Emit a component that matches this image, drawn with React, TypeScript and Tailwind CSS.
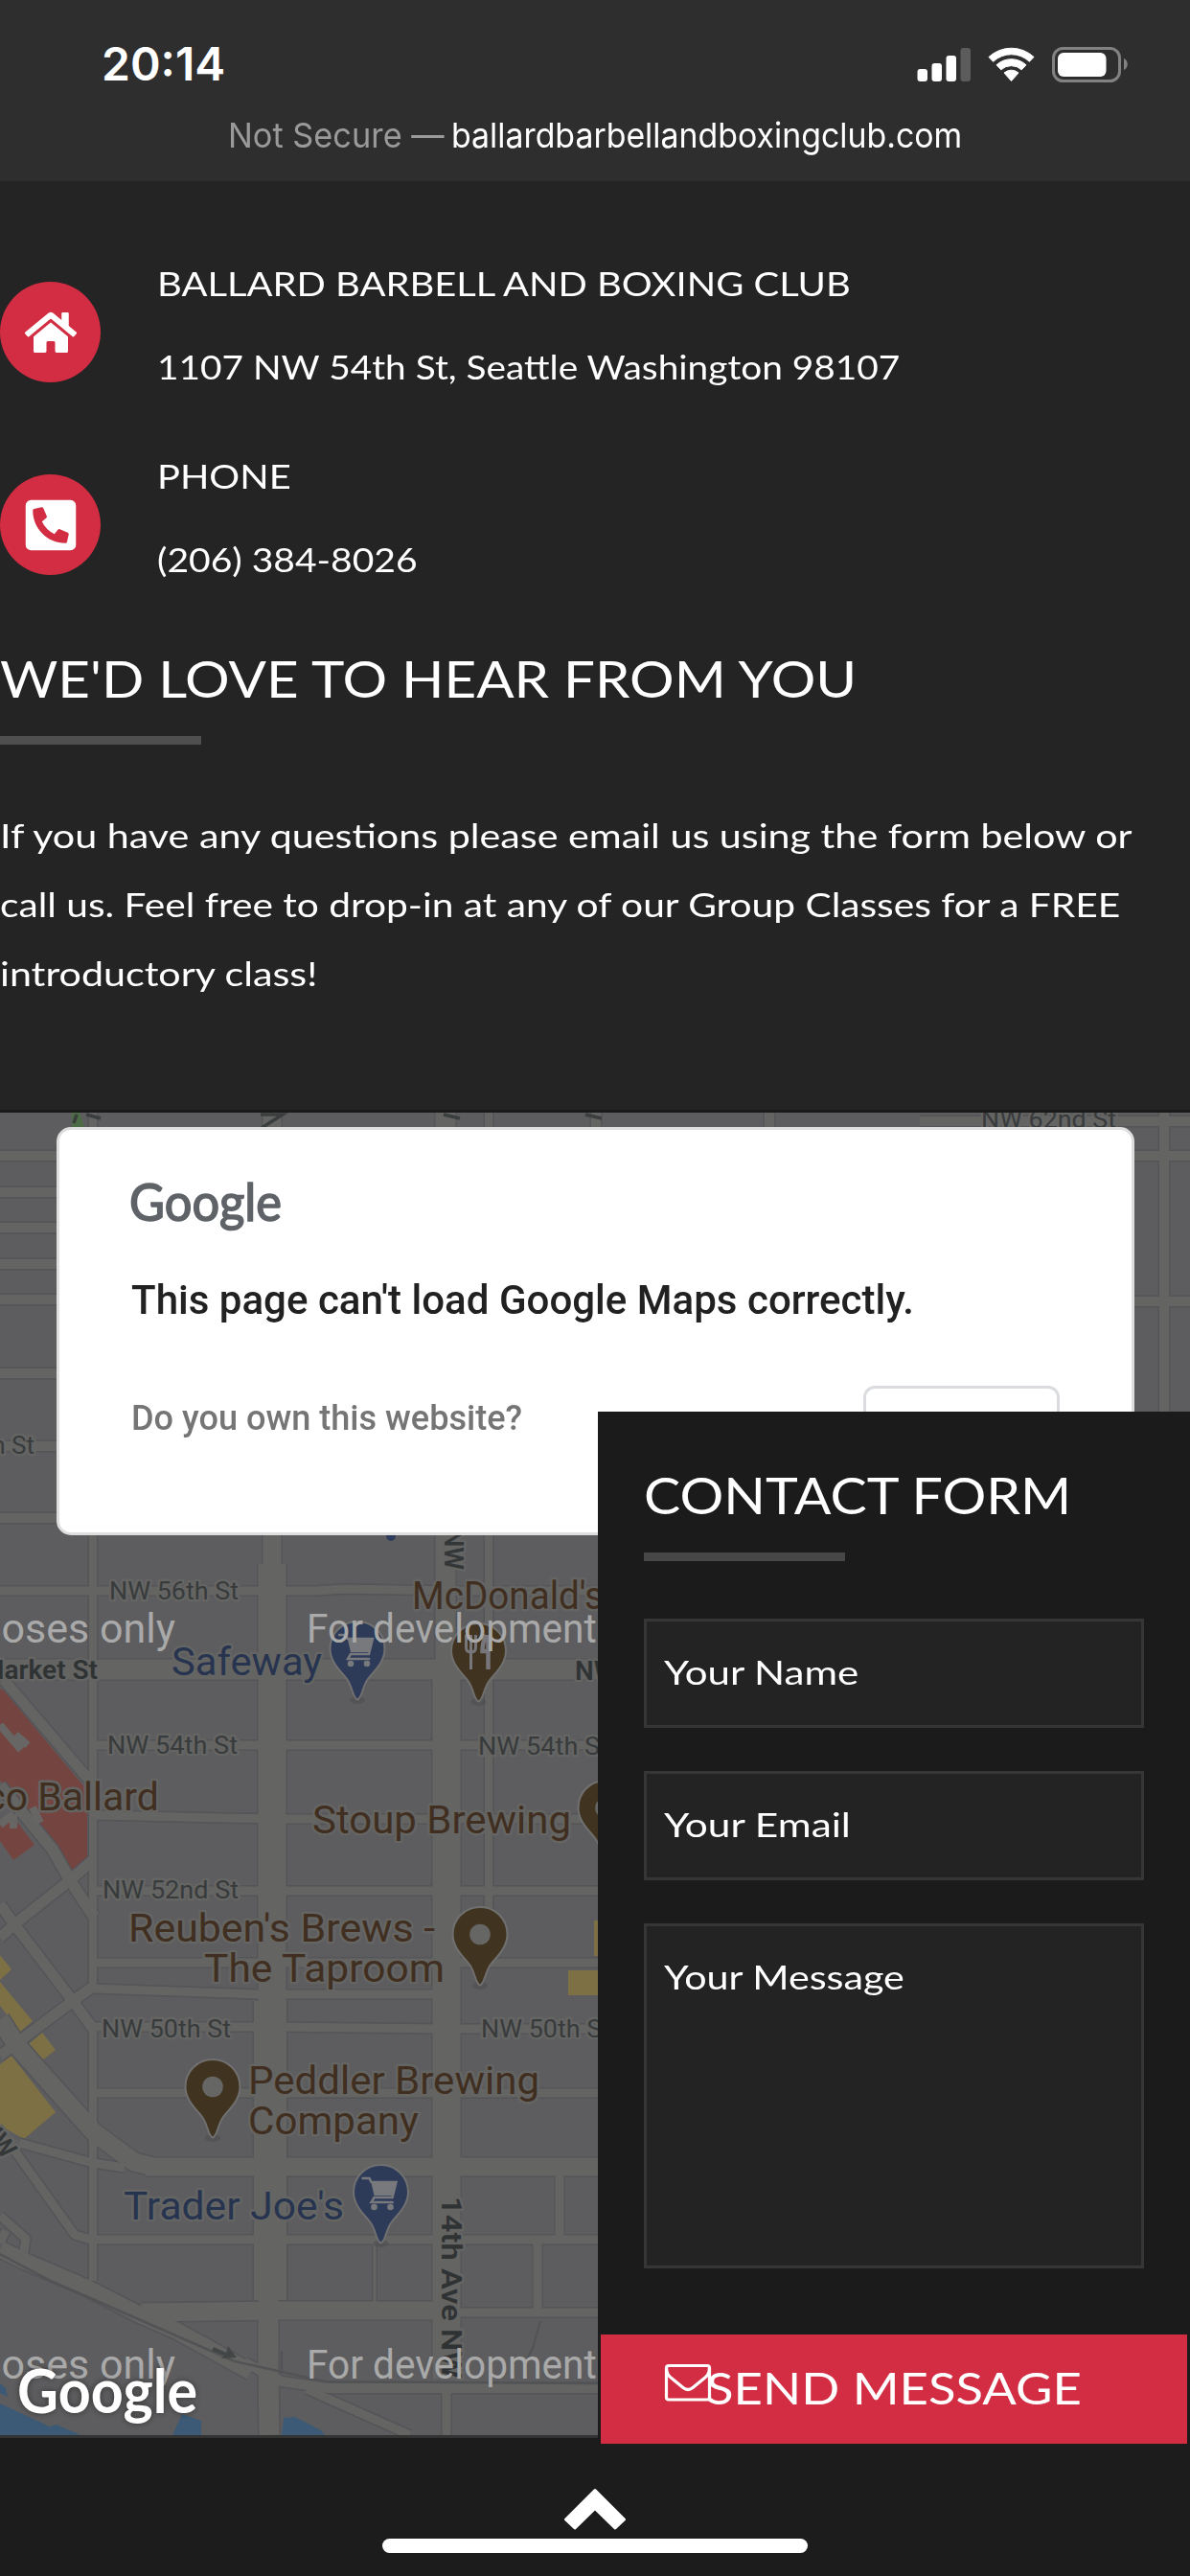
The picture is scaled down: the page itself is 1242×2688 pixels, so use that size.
import { useLayoutEffect, useRef, useState, type ReactNode } from "react";
import { FaHome, FaPhoneSquareAlt } from "react-icons/fa";

/* Single line of text stretched horizontally to a given width. */
function Fit({ w, children, className = "" }: { w: number; children: ReactNode; className?: string }) {
  const ref = useRef<HTMLSpanElement>(null);
  const [scale, setScale] = useState(1);
  useLayoutEffect(() => {
    if (ref.current) setScale(w / ref.current.offsetWidth);
  }, [w]);
  return (
    <span ref={ref} className={`inline-block origin-left whitespace-nowrap ${className}`} style={{ transform: `scaleX(${scale})` }}>
      {children}
    </span>
  );
}

function StatusBar() {
  return (
    <header className="h-[189px] bg-[#2e2e2e] font-['Inter',sans-serif]">
      <div className="flex h-[116px] items-start justify-between pl-[106px] pr-[64px] pt-[38px]">
        <div className="text-[48px] font-semibold leading-[58px] text-white">
          <Fit w={129}>20:14</Fit>
        </div>
        <svg className="mt-[10px] h-[40px] w-[222px]" viewBox="956 48 222 40" fill="#fff">
          <rect x="957.5" y="72" width="10.5" height="13" rx="3" />
          <rect x="972.5" y="66" width="10.5" height="19" rx="3" />
          <rect x="987.5" y="58" width="10.5" height="27" rx="3" />
          <rect x="1002.5" y="50" width="10.5" height="35" rx="3" fill="#5c5c5c" />
          <path d="M1032 59.5a34.5 34.5 0 0 1 47 0l-4.6 4.8a27.5 27.5 0 0 0-37.8 0z" strokeLinejoin="round" stroke="#fff" strokeWidth="1" />
          <path d="M1040 67.8a22.7 22.7 0 0 1 31 0l-4.8 5a15.8 15.8 0 0 0-21.4 0z" strokeLinejoin="round" stroke="#fff" strokeWidth="1" />
          <path d="M1048 76a11.4 11.4 0 0 1 15 0l-7.5 8.5z" strokeLinejoin="round" stroke="#fff" strokeWidth="1" />
          <rect x="1099.5" y="50.5" width="69" height="34" rx="10" fill="none" stroke="#828282" strokeWidth="3" />
          <rect x="1104" y="55" width="50.5" height="25" rx="6" />
          <path d="M1173 61c5 2 5 10 0 12z" fill="#828282" />
        </svg>
      </div>
      <div className="flex pl-[238px] text-[36px] leading-[50px]">
        <div className="w-[233px] text-[#9a9a9a]"><Fit w={226}>Not Secure —</Fit></div>
        <div className="text-white"><Fit w={533}>ballardbarbellandboxingclub.com</Fit></div>
      </div>
    </header>
  );
}

function ContactRow({ icon, title, titleW, detail, detailW }: { icon: ReactNode; title: string; titleW: number; detail: string; detailW: number }) {
  return (
    <div className="flex items-start gap-[59px]">
      <div className="mt-[42px] flex size-[105px] shrink-0 items-center justify-center rounded-full bg-[#d22d42] text-white">{icon}</div>
      <div className="text-[35px] leading-[87px]">
        <div><Fit w={titleW}>{title}</Fit></div>
        <div><Fit w={detailW}>{detail}</Fit></div>
      </div>
    </div>
  );
}

type Road = [d: string, w: number];

const roads: Road[] = [
  ["M0 1206H1242M0 1244H624M0 1281H624M0 1319H624M0 1356H62M0 1433H62M0 1509H62M0 1584H62", 9],
  ["M97 1161V2074M97 2112V2380M510 1161V1740M510 1740V2035", 7],
  ["M622 1161V1180M803 1161V1180M1215 1161V1480M960 1170H1242M1180 1358H1242", 9],
  ["M284 1161V1640", 18],
  ["M284 1632V2100", 28],
  ["M282 2088V2400", 33],
  ["M280 2400V2465L281 2541", 20],
  ["M465 1161V1750", 20],
  ["M466 1745V2482", 28],
  ["M0 1660H240L330 1660L360 1658L470 1660H624M97 1821H640M97 1894L284 1898H640M97 1973H640M97 2048H640M97 2075L270 2081H466M97 2115L284 2115L466 2117H640M97 2184H640M97 2337H640", 8],
  ["M0 1742H640", 20],
  ["M152 2261H640M147 2413L290 2411H466", 18],
  ["M466 2413H640M584 2261V2337M561 2337V2413M466 2492V2541", 8],
  ["M4 1753L97 1862", 10],
  ["M0 1863L55 1930L73 1962L98 2000", 11],
  ["M97 1941L73 1962L15 2008L0 2022M0 1987L15 2008L76 2088L98 2118M97 2073L76 2088L20 2130L0 2145", 10],
  ["M0 2107L18 2135L98 2225L140 2256L160 2261", 18],
  ["M20 2236L97 2257L130 2262M16 2245L78 2332L98 2338M0 2312L27 2336L24 2356M6 2328L0 2340", 8],
  ["M0 2347L27 2360L90 2387L147 2416L184 2432L262 2475", 16],
  ["M255 2465L294 2485L343 2492H640", 9],
  ["M320 2493L428 2541", 8],
  ["M391 2340V2403", 2],
];

function Roads() {
  return (
    <g fill="none" strokeLinejoin="round">
      {roads.map(([d, w], i) => (
        <path key={`edge-${i}`} d={d} stroke="#545459" strokeWidth={w + 4} />
      ))}
      {roads.map(([d, w], i) => (
        <path key={`road-${i}`} d={d} stroke="#646463" strokeWidth={w + 1} />
      ))}
    </g>
  );
}

function Pin({ x, y, fill, kind = "dot" }: { x: number; y: number; fill: string; kind?: "dot" | "cart" | "food" }) {
  return (
    <g transform={`translate(${x} ${y})`}>
      <ellipse cx="0" cy="82" rx="8" ry="4" fill="#4f4f52" opacity=".6" />
      <path d="M0 0C16 0 28.500 12.500 28.500 28.500C28.500 42 18 51 11 60C5 68 5 80 0 81.500C-5 80-5 68-11 60C-18 51-28.500 42-28.500 28.500C-28.500 12.500-16 0 0 0Z" fill={fill} stroke="#707070" strokeWidth="2" />
      {kind === "dot" && <circle cx="0" cy="28.500" r="10.800" fill="#666665" />}
      {kind === "cart" && (
        <g fill="#77797c">
          <path d="M-20 14h8l2 4h26l-4 16h-19l-3 5h22v-1" fill="none" stroke="#77797c" strokeWidth="2.500" />
          <path d="M-10 19h26l-4 13h-19z" />
          <circle cx="-7" cy="44" r="3.300" />
          <circle cx="10" cy="44" r="3.300" />
        </g>
      )}
      {kind === "food" && (
        <g fill="none" stroke="#77767a">
          <path d="M-13 12v13q0 5 5 5t5-5V12M-8 12v36" strokeWidth="3" />
          <path d="M10 12v36M8 12q-4 8-4 17h5" strokeWidth="4.500" />
        </g>
      )}
    </g>
  );
}

const BROWN = "#402f20";
const BLUE = "#273450";
const GREY = "#383b3c";

function Label({ x, y, w, size = 41, fill, end, bold, children }: { x: number; y: number; w?: number; size?: number; fill: string; end?: boolean; bold?: boolean; children: string }) {
  return (
    <text
      x={x}
      y={y}
      fontSize={size}
      fill={fill}
      fontWeight={bold ? 600 : 400}
      textAnchor={end ? "end" : "start"}
      textLength={w}
      lengthAdjust="spacingAndGlyphs"
      stroke="#646463"
      strokeWidth="5"
      strokeLinejoin="round"
      paintOrder="stroke"
    >
      {children}
    </text>
  );
}

function StreetMap() {
  return (
    <svg className="absolute inset-x-0 top-[3px] h-[1380px] w-[1242px] font-['Roboto',sans-serif]" viewBox="0 1161 1242 1380">
      <rect x="0" y="1161" width="1242" height="1380" fill="#5d5d5f" />
      <g fill="#3c5a75">
        <path d="M0 2487L6 2492L8 2501L0 2497ZM0 2508L52 2532L59 2530L84 2541H0ZM190 2519L210 2526V2541H180ZM296 2523L308 2522L335 2536L339 2541H294Z" />
      </g>
      <path d="M0 1762L4 1764L91 1868V1940L75 1952L40 1905L0 1858ZM0 1921L14 1941L36 1925L14 1896L0 1904Z" fill="#744540" />
      <path d="M0 2040L12 2055L0 2066V2068L34 2109L21 2120L0 2093ZM44 2121L58 2139L44 2150L30 2133ZM12 2145L58 2204L25 2232L0 2218V2154ZM620 2004H640V2041H620ZM593 2056H640V2082H593Z" fill="#7c7044" />
      <Roads />
      <path d="M0 1800L22 1826M16 1810L29 1821M0 1904L14 1893M14 1893V1908M34 1886L42 1902" stroke="#686664" strokeWidth="8" fill="none" />
      <path d="M75 1161H83L88 1176H75Z" fill="#4b6c44" />
      <path d="M0 2352L53 2380L245 2464L339 2485L624 2487" fill="none" stroke="#525355" strokeWidth="2.500" />
      <path d="M294 2453V2475M564 2422L556 2450L548 2466" fill="none" stroke="#515254" strokeWidth="2" />
      <path d="M223 2449L236 2455L238 2448L247 2460L231 2461L234 2458L221 2453Z" fill="#434646" />
      <g stroke="#3b3e3f" strokeWidth="3.500" fill="none">
        <path d="M80 1163L77 1172M90 1163L105 1167M463 1163L480 1167M611 1163L628 1167" />
        <path d="M272 1163H295L273 1177" />
      </g>

      <Label x={1024} y={1177} w={141} size={26} fill={GREY}>NW 62nd St</Label>
      <Label x={36} y={1517} size={26} fill={GREY} end>NW 58th St</Label>
      <Label x={114} y={1669} w={135} size={26} fill={GREY}>NW 56th St</Label>
      <Label x={102} y={1752} size={28} fill="#303334" end bold>NW Market St</Label>
      <Label x={600} y={1753} size={28} fill="#303334" bold>NW Market St</Label>
      <Label x={112} y={1830} w={136} size={26} fill={GREY}>NW 54th St</Label>
      <Label x={499} y={1831} w={136} size={26} fill={GREY}>NW 54th St</Label>
      <Label x={107} y={1981} w={142} size={26} fill={GREY}>NW 52nd St</Label>
      <Label x={106} y={2126} w={135} size={26} fill={GREY}>NW 50th St</Label>
      <Label x={502} y={2126} w={135} size={26} fill={GREY}>NW 50th St</Label>
      <g transform="translate(461 2292) rotate(90)">
        <Label x={0} y={0} w={190} size={30} fill="#303334" bold>14th Ave NW</Label>
      </g>
      <g transform="translate(464 1638) rotate(90)">
        <Label x={0} y={0} size={27} fill="#343738" end bold>14th Ave NW</Label>
      </g>
      <g transform="translate(4 2254) rotate(52)">
        <Label x={0} y={0} size={27} fill="#343738" end bold>Leary Ave NW</Label>
      </g>

      <ellipse cx="408" cy="1602" rx="5" ry="6" fill="#2e3b5a" />
      <Pin x={373} y={1692} fill="#2d3a58" kind="cart" />
      <Pin x={499.5} y={1694} fill="#40331f" kind="food" />
      <Pin x={632} y={1858} fill="#40331f" />
      <Pin x={501} y={1990} fill="#40331f" />
      <Pin x={222} y={2149} fill="#40331f" />
      <Pin x={397.5} y={2259} fill="#2d3a58" kind="cart" />

      <Label x={430} y={1679} w={200} fill={BROWN}>McDonald's</Label>
      <Label x={179} y={1748} w={157} fill={BLUE}>Safeway</Label>
      <Label x={166} y={1889} fill={BROWN} end>Taco Ballard</Label>
      <Label x={326} y={1913} w={270} fill={BROWN}>Stoup Brewing</Label>
      <Label x={134} y={2026} w={320} fill={BROWN}>Reuben's Brews -</Label>
      <Label x={213} y={2068} w={251} fill={BROWN}>The Taproom</Label>
      <Label x={259} y={2185} w={304} fill={BROWN}>Peddler Brewing</Label>
      <Label x={259} y={2227} w={178} fill={BROWN}>Company</Label>
      <Label x={129} y={2316} w={230} fill={BLUE}>Trader Joe's</Label>

      <g fontSize="43" fill="#a9a9a9">
        {[1714, 2482].map((y) => (
          <g key={y}>
            <text x="183" y={y} textAnchor="end">For development purposes only</text>
            <text x="320" y={y} textLength="566" lengthAdjust="spacingAndGlyphs">For development purposes only</text>
          </g>
        ))}
      </g>
      <text x="18" y="2518" fontSize="64" fontWeight="700" fill="#fff" textLength="188" lengthAdjust="spacingAndGlyphs" className="font-['Lato',sans-serif] drop-shadow-[0_0_3px_rgba(0,0,0,0.45)]">Google</text>
    </svg>
  );
}

function MapError() {
  return (
    <div className="absolute left-[59px] top-[18px] h-[426px] w-[1125px] rounded-[15px] border-[3px] border-[#dedede] bg-white px-[75px] font-['Roboto',sans-serif]">
      <svg className="mt-[48px] h-[66px] w-[164px] overflow-visible" viewBox="0 0 164 66">
        <text x="-2" y="47" fontSize="54" fill="#5f6368" stroke="#5f6368" strokeWidth="1.600" textLength="159" lengthAdjust="spacingAndGlyphs" className="font-['Lato',sans-serif]">Google</text>
      </svg>
      <div className="mt-[34px] text-[42px] font-medium leading-[60px] text-[#212121]"><Fit w={817}>This page can't load Google Maps correctly.</Fit></div>
      <div className="flex items-start justify-between">
        <div className="mt-[66px] text-[36px] font-medium leading-[54px] text-[#757575]"><Fit w={408}>Do you own this website?</Fit></div>
        <button className="mt-[59px] h-[108px] w-[205px] rounded-[12px] border-[3px] border-[#dadce0] text-[42px] font-medium text-[#1a73e8]">OK</button>
      </div>
    </div>
  );
}

function ContactForm() {
  return (
    <form className="absolute right-0 top-[315px] w-[618px] bg-[#1b1b1b] text-white">
      <div className="px-[48px] pt-[51px]">
        <h2 className="text-[53px] leading-[72px]"><Fit w={446}>CONTACT FORM</Fit></h2>
        <div className="mt-[24px] h-[9px] w-[210px] bg-[#474747]" />
        <div className="mt-[60px] flex flex-col gap-[45px] text-[35px] leading-[105px]">
          <div className="h-[114px] border-[3px] border-[#363636] bg-[#232323] px-[18px]"><Fit w={203}>Your Name</Fit></div>
          <div className="h-[114px] border-[3px] border-[#363636] bg-[#232323] px-[18px]"><Fit w={195}>Your Email</Fit></div>
          <div className="h-[360px] border-[3px] border-[#363636] bg-[#232323] px-[18px]"><Fit w={251}>Your Message</Fit></div>
        </div>
      </div>
      <button type="button" className="mx-[3px] mt-[69px] flex h-[114px] w-[612px] items-start bg-[#d22d42] pl-[66px]">
        <svg className="mt-[30px] h-[40px] w-[50px] shrink-0" viewBox="0 0 50 40" fill="none" stroke="#fff" strokeWidth="3.200">
          <rect x="2.500" y="2.500" width="45" height="35.500" rx="2.500" />
          <path d="M2.500 5C2.500 11 5 13.500 9 16.500L20 25.500Q25 29.500 30 25.500L41 16.500C45 13.500 47.500 11 47.500 5" />
        </svg>
        <span className="-ml-[6px] text-[47px] leading-[110px]"><Fit w={392}>SEND MESSAGE</Fit></span>
      </button>
    </form>
  );
}

export default function App() {
  return (
    <div className="h-[2688px] w-[1242px] overflow-hidden bg-[#1c1c1c] font-['Lato',sans-serif] text-white">
      <StatusBar />
      <section className="h-[969px] bg-[#242424] pt-[63px]">
        <div className="flex flex-col gap-[27px]">
          <ContactRow icon={<FaHome className="size-[54px]" />} title="BALLARD BARBELL AND BOXING CLUB" titleW={724} detail="1107 NW 54th St, Seattle Washington 98107" detailW={775} />
          <ContactRow icon={<FaPhoneSquareAlt className="size-[60px]" />} title="PHONE" titleW={140} detail="(206) 384-8026" detailW={272} />
        </div>
        <h2 className="mt-[45px] text-[53px] leading-[72px]"><Fit w={894}>WE'D LOVE TO HEAR FROM YOU</Fit></h2>
        <div className="mt-[24px] h-[9px] w-[210px] bg-[#4f4f4f]" />
        <div className="mt-[58px] text-[35px] leading-[72px]">
          <div><Fit w={1182}>If you have any questions please email us using the form below or</Fit></div>
          <div><Fit w={1169}>call us. Feel free to drop-in at any of our Group Classes for a FREE</Fit></div>
          <div><Fit w={331}>introductory class!</Fit></div>
        </div>
      </section>
      <section className="relative h-[1386px] border-b-[3px] border-[#333333] bg-[#1a1a1a]">
        <StreetMap />
        <MapError />
        <ContactForm />
      </section>
      <footer className="relative flex flex-col items-center pt-[52px]">
        <svg className="h-[44px] w-[66px]" viewBox="0 0 66 44" fill="#fff" stroke="#fff" strokeWidth="3" strokeLinejoin="round">
          <path d="M33 2.500L63.500 33L54 42L33 21.500L12 42L2.500 33Z" />
        </svg>
        <div className="mt-[9px] h-[15px] w-[444px] rounded-full bg-white" />
      </footer>
    </div>
  );
}
